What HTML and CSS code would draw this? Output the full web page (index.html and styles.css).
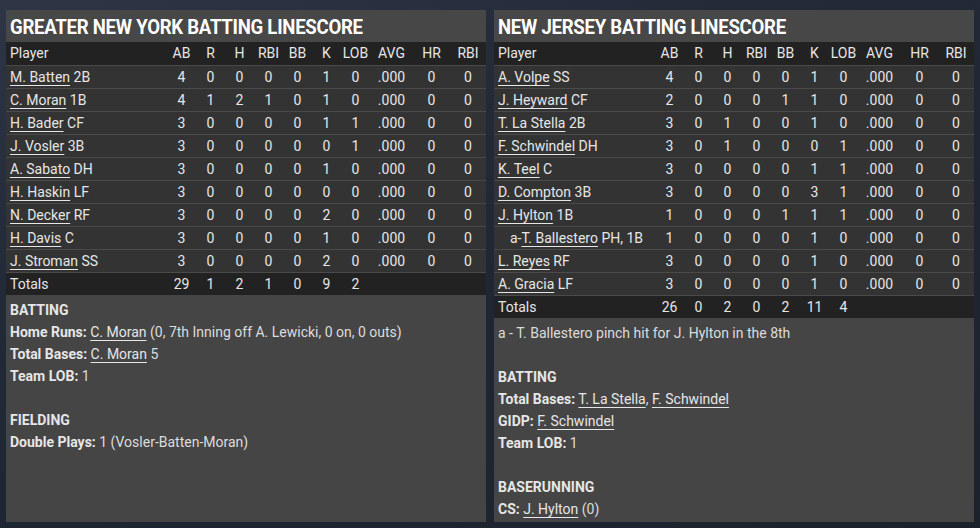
FILE: index.html
```html
<!DOCTYPE html>
<html lang="en">
<head>
    <meta charset="UTF-8">
    <meta name="viewport" content="width=device-width, initial-scale=1.0">
    <title>Batting Linescore</title>
    <link rel="stylesheet" href="styles.css">
</head>
<body>
    <div class="boxes">
        <div class="panel">
            <h2 class="panel-title"><span>GREATER NEW YORK BATTING LINESCORE</span></h2>
            <table class="linescore">
                <colgroup>
                    <col class="c-player">
                    <col class="c-num"><col class="c-num"><col class="c-num"><col class="c-num">
                    <col class="c-num"><col class="c-num"><col class="c-num">
                    <col class="c-avg"><col class="c-hr"><col class="c-rbi">
                </colgroup>
                <thead>
                    <tr><th>Player</th><th>AB</th><th>R</th><th>H</th><th>RBI</th><th>BB</th><th>K</th><th>LOB</th><th>AVG</th><th>HR</th><th>RBI</th></tr>
                </thead>
                <tbody>
                    <tr><td><a href="#">M. Batten</a> 2B</td><td>4</td><td>0</td><td>0</td><td>0</td><td>0</td><td>1</td><td>0</td><td>.000</td><td>0</td><td>0</td></tr>
                    <tr><td><a href="#">C. Moran</a> 1B</td><td>4</td><td>1</td><td>2</td><td>1</td><td>0</td><td>1</td><td>0</td><td>.000</td><td>0</td><td>0</td></tr>
                    <tr><td><a href="#">H. Bader</a> CF</td><td>3</td><td>0</td><td>0</td><td>0</td><td>0</td><td>1</td><td>1</td><td>.000</td><td>0</td><td>0</td></tr>
                    <tr><td><a href="#">J. Vosler</a> 3B</td><td>3</td><td>0</td><td>0</td><td>0</td><td>0</td><td>0</td><td>1</td><td>.000</td><td>0</td><td>0</td></tr>
                    <tr><td><a href="#">A. Sabato</a> DH</td><td>3</td><td>0</td><td>0</td><td>0</td><td>0</td><td>1</td><td>0</td><td>.000</td><td>0</td><td>0</td></tr>
                    <tr><td><a href="#">H. Haskin</a> LF</td><td>3</td><td>0</td><td>0</td><td>0</td><td>0</td><td>0</td><td>0</td><td>.000</td><td>0</td><td>0</td></tr>
                    <tr><td><a href="#">N. Decker</a> RF</td><td>3</td><td>0</td><td>0</td><td>0</td><td>0</td><td>2</td><td>0</td><td>.000</td><td>0</td><td>0</td></tr>
                    <tr><td><a href="#">H. Davis</a> C</td><td>3</td><td>0</td><td>0</td><td>0</td><td>0</td><td>1</td><td>0</td><td>.000</td><td>0</td><td>0</td></tr>
                    <tr><td><a href="#">J. Stroman</a> SS</td><td>3</td><td>0</td><td>0</td><td>0</td><td>0</td><td>2</td><td>0</td><td>.000</td><td>0</td><td>0</td></tr>
                </tbody>
                <tfoot>
                    <tr><td>Totals</td><td>29</td><td>1</td><td>2</td><td>1</td><td>0</td><td>9</td><td>2</td><td></td><td></td><td></td></tr>
                </tfoot>
            </table>
            <div class="notes">
                <p class="note-head">BATTING</p>
                <p><b>Home Runs:</b> <a href="#">C. Moran</a> (0, 7th Inning off A. Lewicki, 0 on, 0 outs)</p>
                <p><b>Total Bases:</b> <a href="#">C. Moran</a> 5</p>
                <p><b>Team LOB:</b> 1</p>
                <p class="blank"></p>
                <p class="note-head">FIELDING</p>
                <p><b>Double Plays:</b> 1 (Vosler-Batten-Moran)</p>
            </div>
        </div>

        <div class="panel">
            <h2 class="panel-title"><span>NEW JERSEY BATTING LINESCORE</span></h2>
            <table class="linescore">
                <colgroup>
                    <col class="c-player">
                    <col class="c-num"><col class="c-num"><col class="c-num"><col class="c-num">
                    <col class="c-num"><col class="c-num"><col class="c-num">
                    <col class="c-avg"><col class="c-hr"><col class="c-rbi">
                </colgroup>
                <thead>
                    <tr><th>Player</th><th>AB</th><th>R</th><th>H</th><th>RBI</th><th>BB</th><th>K</th><th>LOB</th><th>AVG</th><th>HR</th><th>RBI</th></tr>
                </thead>
                <tbody>
                    <tr><td><a href="#">A. Volpe</a> SS</td><td>4</td><td>0</td><td>0</td><td>0</td><td>0</td><td>1</td><td>0</td><td>.000</td><td>0</td><td>0</td></tr>
                    <tr><td><a href="#">J. Heyward</a> CF</td><td>2</td><td>0</td><td>0</td><td>0</td><td>1</td><td>1</td><td>0</td><td>.000</td><td>0</td><td>0</td></tr>
                    <tr><td><a href="#">T. La Stella</a> 2B</td><td>3</td><td>0</td><td>1</td><td>0</td><td>0</td><td>1</td><td>0</td><td>.000</td><td>0</td><td>0</td></tr>
                    <tr><td><a href="#">F. Schwindel</a> DH</td><td>3</td><td>0</td><td>1</td><td>0</td><td>0</td><td>0</td><td>1</td><td>.000</td><td>0</td><td>0</td></tr>
                    <tr><td><a href="#">K. Teel</a> C</td><td>3</td><td>0</td><td>0</td><td>0</td><td>0</td><td>1</td><td>1</td><td>.000</td><td>0</td><td>0</td></tr>
                    <tr><td><a href="#">D. Compton</a> 3B</td><td>3</td><td>0</td><td>0</td><td>0</td><td>0</td><td>3</td><td>1</td><td>.000</td><td>0</td><td>0</td></tr>
                    <tr><td><a href="#">J. Hylton</a> 1B</td><td>1</td><td>0</td><td>0</td><td>0</td><td>1</td><td>1</td><td>1</td><td>.000</td><td>0</td><td>0</td></tr>
                    <tr class="sub"><td>a-<a href="#">T. Ballestero</a> PH, 1B</td><td>1</td><td>0</td><td>0</td><td>0</td><td>0</td><td>1</td><td>0</td><td>.000</td><td>0</td><td>0</td></tr>
                    <tr><td><a href="#">L. Reyes</a> RF</td><td>3</td><td>0</td><td>0</td><td>0</td><td>0</td><td>1</td><td>0</td><td>.000</td><td>0</td><td>0</td></tr>
                    <tr><td><a href="#">A. Gracia</a> LF</td><td>3</td><td>0</td><td>0</td><td>0</td><td>0</td><td>1</td><td>0</td><td>.000</td><td>0</td><td>0</td></tr>
                </tbody>
                <tfoot>
                    <tr><td>Totals</td><td>26</td><td>0</td><td>2</td><td>0</td><td>2</td><td>11</td><td>4</td><td></td><td></td><td></td></tr>
                </tfoot>
            </table>
            <div class="notes">
                <p>a - T. Ballestero pinch hit for J. Hylton in the 8th</p>
                <p class="blank"></p>
                <p class="note-head">BATTING</p>
                <p><b>Total Bases:</b> <a href="#">T. La Stella</a>, <a href="#">F. Schwindel</a></p>
                <p><b>GIDP:</b> <a href="#">F. Schwindel</a></p>
                <p><b>Team LOB:</b> 1</p>
                <p class="blank"></p>
                <p class="note-head">BASERUNNING</p>
                <p><b>CS:</b> <a href="#">J. Hylton</a> (0)</p>
            </div>
        </div>
    </div>
</body>
</html>
```

FILE: styles.css
```css
* {
    padding: 0;
    margin: 0;
    box-sizing: border-box;
}
body {
    font-family: Roboto, "Noto Sans", sans-serif;
    font-size: 14px;
    color: #e6e6e6;
    background-color: #1f2632;
    background-image: linear-gradient(160deg, #2e3646 0%, #232a38 30%, #1f2633 60%, #1c222c 100%);
    height: 528px;
    overflow: hidden;
}
.boxes {
    display: flex;
    gap: 8px;
    padding: 10px 6px 6px 6px;
    height: 100%;
}
.panel {
    width: 480px;
    height: 512px;
    background-color: #454545;
    display: flex;
    flex-direction: column;
}
.panel-title {
    height: 32px;
    background-color: #474747;
    color: #ffffff;
    font-size: 21px;
    font-weight: 700;
    letter-spacing: -0.3px;
    line-height: 34px;
    padding-left: 4px;
    white-space: nowrap;
}
.panel-title span {
    display: inline-block;
    transform: scaleX(0.885);
    transform-origin: left center;
}

.linescore {
    width: 100%;
    table-layout: fixed;
    border-collapse: collapse;
}
.c-num { width: 29px; }
.c-avg { width: 43px; }
.c-hr { width: 37px; }
.c-rbi { width: 36px; }
.linescore th,
.linescore td {
    height: 23px;
    padding: 0;
    text-align: center;
    font-weight: 400;
    white-space: nowrap;
}
.linescore th:first-child,
.linescore td:first-child {
    text-align: left;
    padding-left: 4px;
}
.linescore thead tr {
    background-color: #222222;
}
.linescore tbody tr {
    background-color: #333333;
    border-top: 1px solid #4a4a4a;
}
.linescore tfoot tr {
    background-color: #222222;
    border-top: 1px solid #4a4a4a;
}
.linescore tr.sub td:first-child {
    padding-left: 16px;
}

a {
    color: #e6e6e6;
    text-decoration: underline;
    text-underline-offset: 3px;
}

.notes {
    flex: 1;
    padding: 4px 4px 0 4px;
    background-color: #454545;
    color: #dcdcdc;
}
.notes p {
    line-height: 22px;
    height: 22px;
    white-space: nowrap;
}
.notes b,
.note-head {
    font-weight: 700;
    color: #e6e6e6;
}
```
